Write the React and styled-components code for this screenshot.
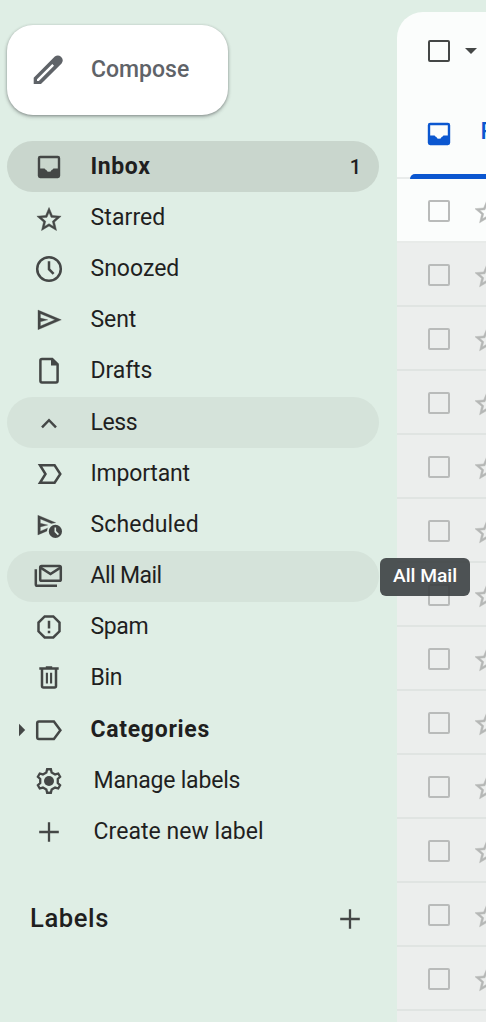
import React from "react";
import styled, { createGlobalStyle } from "styled-components";

const GlobalStyle = createGlobalStyle`
  * {
    box-sizing: border-box;
  }
  body {
    margin: 0;
    background: #dfeee5;
    font-family: Roboto, "Liberation Sans", sans-serif;
    color: #1f1f1f;
    overflow: hidden;
  }
`;

const Page = styled.div`
  display: flex;
  height: 1022px;
  overflow: hidden;
`;

const Sidebar = styled.aside`
  flex: 0 0 397px;
  padding: 25px 18px 0 7px;
`;

const ComposeButton = styled.button`
  display: flex;
  align-items: center;
  gap: 27px;
  width: 221px;
  height: 90px;
  margin: 0 0 26px;
  padding: 0 0 0 25px;
  border: none;
  border-radius: 26px;
  background: #fff;
  box-shadow: 0 1px 3px rgba(60, 64, 67, 0.45), 0 2px 4px rgba(60, 64, 67, 0.2);
  color: #5f6368;
  font-family: inherit;
`;

const Label = styled.span`
  font-size: ${(props) => props.$size || 23}px;
  font-weight: ${(props) => props.$weight || 400};
  letter-spacing: ${(props) => props.$tracking || 0}px;
  line-height: 28px;
  white-space: nowrap;
`;

const ComposeLabel = styled(Label)`
  margin-top: -1px;
`;

const Nav = styled.nav`
  display: flex;
  flex-direction: column;
`;

const NavItem = styled.a`
  position: relative;
  display: flex;
  align-items: center;
  height: 51.2px;
  padding: 0 18px 0 8px;
  border-radius: 26px;
  color: #1f1f1f;
  background: ${(props) =>
    props.$active ? "#c9d6cd" : props.$shaded ? "#d5e3da" : "transparent"};
`;

const Expander = styled.span`
  display: flex;
  width: 18px;
  color: #444746;
`;

const NavIcon = styled.span`
  display: flex;
  color: #444746;
`;

const NavLabel = styled(Label)`
  flex: 1;
  margin-left: ${(props) => (props.$indent ? 28.5 : 25.5)}px;
`;

const Tooltip = styled.div`
  position: absolute;
  left: 373px;
  top: 7px;
  z-index: 2;
  width: 90px;
  height: 38px;
  padding-top: 4px;
  border-radius: 6px;
  background: rgba(60, 64, 67, 0.9);
  color: #fff;
  text-align: center;
`;

const LabelsHeader = styled.div`
  display: flex;
  align-items: center;
  justify-content: space-between;
  height: 52px;
  margin-top: 35px;
  padding: 0 13px 0 23px;
  color: #1f1f1f;
`;

const HeaderLabel = styled(Label)`
  padding-bottom: 2px;
`;

const MailPanel = styled.main`
  flex: 1;
  min-width: 0;
  margin-top: 12px;
  overflow: hidden;
  border-top-left-radius: 26px;
  background: #fbfdfc;
`;

const Toolbar = styled.div`
  display: flex;
  align-items: center;
  gap: 15px;
  height: 78px;
  padding-left: 31px;
  color: #444746;
`;

const Tabs = styled.div`
  height: 89px;
  border-bottom: 2px solid #e9eceb;
`;

const Tab = styled.div`
  position: relative;
  display: flex;
  align-items: center;
  height: 89px;
  width: 300px;
  padding: 0 0 2px 26px;
  gap: 25.5px;
  color: #0b57d0;

  &::after {
    content: "";
    position: absolute;
    left: 13px;
    right: 0;
    bottom: 0;
    height: 5px;
    border-top-left-radius: 5px;
    background: #0b57d0;
  }
`;

const TabLabel = styled(Label)`
  padding-bottom: 4px;
`;

const MailRow = styled.div`
  display: flex;
  align-items: center;
  gap: 22px;
  width: 300px;
  height: 64px;
  padding-left: 31px;
  border-bottom: 2px solid ${(props) => (props.$unread ? "#e8ebe9" : "#e0e4e2")};
  background: ${(props) => (props.$unread ? "#fbfdfc" : "#eceeed")};
`;

const Checkbox = styled.span`
  flex: none;
  width: 22px;
  height: 22px;
  margin-top: ${(props) => (props.$dark ? 0 : 2)}px;
  border: 2px solid ${(props) => (props.$dark ? "#444746" : "#b9bbba")};
  border-radius: 2px;
`;

const Svg = ({ children, size = 32 }) => (
  <svg width={size} height={size} viewBox="0 0 32 32" fill="none">
    {children}
  </svg>
);

const line = { stroke: "currentColor", strokeWidth: 2.5 };

const InboxIcon = () => (
  <Svg>
    <path
      fill="currentColor"
      fillRule="evenodd"
      d="M7.2 4.8H24.8Q27.2 4.8 27.2 7.2V24.8Q27.2 27.2 24.8 27.2H7.2Q4.8 27.2 4.8 24.8V7.2Q4.8 4.8 7.2 4.8ZM7.2 7.2V17.4H11.6Q12.2 18.4 13.4 18.9Q14 20.8 16 20.8Q18 20.8 18.6 18.9Q19.8 18.4 20.4 17.4H24.8V7.2Z"
    />
  </Svg>
);

const STAR =
  "M22 9.24l-7.19-.62L12 2 9.19 8.63 2 9.24l5.46 4.73L5.82 21 12 17.27 18.18 21l-1.63-7.03L22 9.24zM12 15.4l-3.76 2.27 1-4.28-3.32-2.88 4.38-.38L12 6.1l1.71 4.04 4.38.38-3.32 2.88 1 4.28L12 15.4z";

const StarIcon = () => (
  <Svg>
    <path
      fill="currentColor"
      stroke="currentColor"
      strokeWidth=".4"
      transform="translate(1.5 3.1) scale(1.21)"
      d={STAR}
    />
  </Svg>
);

const RowStar = styled.svg.attrs({ viewBox: "2 2 20 19", children: <path d={STAR} /> })`
  flex: none;
  width: 24px;
  height: 22.8px;
  margin-top: 3px;
  margin-left: 2.5px;
  overflow: visible;
  fill: #b5b7b6;
  stroke: #b5b7b6;
  stroke-width: 0.4;
`;

const ClockIcon = () => (
  <Svg>
    <circle cx="16" cy="16" r="11.8" {...line} />
    <path d="M16 8.2V16.2L20.6 20.9" {...line} />
  </Svg>
);

const SEND =
  "M120-160v-640l760 320-760 320Zm80-120 474-200-474-200v140l240 60-240 60v140Z";

const SendIcon = () => (
  <Svg>
    <path
      fill="currentColor"
      stroke="currentColor"
      strokeWidth="10"
      transform="translate(1.3 30.6) scale(.0307)"
      d={SEND}
    />
  </Svg>
);

const DraftIcon = () => (
  <Svg>
    <path
      d="M19.2 3.9H9Q7.4 3.9 7.4 5.5V25.8Q7.4 27.4 9 27.4H23Q24.6 27.4 24.6 25.8V9.3Z"
      {...line}
    />
    <path fill="currentColor" d="M18 3V10.4H25.6Z" />
  </Svg>
);

const LessIcon = () => (
  <Svg>
    <path d="M9 20.3L16 13.2L23 20.3" {...line} />
  </Svg>
);

const ImportantIcon = () => (
  <Svg>
    <path d="M7 7.2H21.6L27.3 16L21.6 24.8H7L12.5 16Z" {...line} />
  </Svg>
);

const ScheduledIcon = () => (
  <Svg>
    <mask id="send-cut">
      <rect width="32" height="32" fill="#fff" />
      <circle cx="22.4" cy="22.4" r="8.5" fill="#000" />
      <rect x="22.8" width="10" height="32" fill="#000" />
    </mask>
    <g mask="url(#send-cut)">
      <path
        fill="currentColor"
        stroke="currentColor"
        strokeWidth="10"
        transform="translate(1.2 30.8) scale(.0307)"
        d={SEND}
      />
    </g>
    <path
      fill="currentColor"
      fillRule="evenodd"
      d="M22.4 15.8A6.6 6.6 0 1 1 22.4 29A6.6 6.6 0 1 1 22.4 15.8ZM21.5 18.4V22.9L24.8 26.2L26 25L23.1 22.1V18.4Z"
    />
  </Svg>
);

const AllMailIcon = () => (
  <Svg>
    <path d="M2.8 9.3V24.2Q2.8 25.8 4.4 25.8H24" {...line} />
    <rect x="7.2" y="5.9" width="20.6" height="14.9" rx="1.4" {...line} />
    <path d="M7.2 7.4L17.5 14L27.8 7.4" {...line} />
  </Svg>
);

const SpamIcon = () => (
  <Svg>
    <path d="M11.7 5.4H20.3L26.5 11.6V20.3L20.3 26.5H11.7L5.5 20.3V11.6Z" {...line} />
    <path d="M16 9.8V17.4M16 19.8V22.2" {...line} />
  </Svg>
);

const BinIcon = () => (
  <Svg>
    <path d="M6.3 6.5H25.7M12.8 5.4H19.2" {...line} />
    <path d="M9 6.5V24Q9 25.5 10.5 25.5H21.5Q23 25.5 23 24V6.5" {...line} />
    <path d="M13.9 10.8V21.6M18.1 10.8V21.6" {...line} strokeWidth={2.1} />
  </Svg>
);

const TagIcon = () => (
  <Svg>
    <path
      d="M6 7.4H20.9L27.4 16.2L20.9 25H6Q4.2 25 4.2 23.2V9.2Q4.2 7.4 6 7.4Z"
      {...line}
    />
  </Svg>
);

// six teeth, each one a trapezoid on the inner ring
const gearPoints = [0, 60, 120, 180, 240, 300]
  .flatMap((tooth) =>
    [
      [-17, 9],
      [-9, 11.9],
      [9, 11.9],
      [17, 9],
    ].map(([offset, radius]) => {
      const angle = ((tooth + offset) * Math.PI) / 180;
      return `${(16 + radius * Math.sin(angle)).toFixed(2)},${(16 - radius * Math.cos(angle)).toFixed(2)}`;
    })
  )
  .join(" ");

const GearIcon = () => (
  <Svg>
    <polygon points={gearPoints} {...line} strokeWidth={2.3} />
    <circle cx="16" cy="16" r="5" fill="currentColor" />
  </Svg>
);

const PlusIcon = () => (
  <Svg>
    <path d="M16 6.2V25.8M6.2 16H25.8" {...line} strokeWidth={2.3} />
  </Svg>
);

const PencilIcon = () => (
  <Svg>
    <path
      fill="currentColor"
      fillRule="evenodd"
      d="M1.7 30V23.8L22.8 2.6Q25.9 .2 29 2.7Q32.2 6 29.6 9.4L9 30ZM5 27H6.8L22 11.8L20.3 9.9L5 25.2Z"
    />
  </Svg>
);

const items = [
  { label: "Inbox", icon: InboxIcon, active: true, weight: 700, tracking: 0.6, count: 1 },
  { label: "Starred", icon: StarIcon, tracking: 0.1 },
  { label: "Snoozed", icon: ClockIcon },
  { label: "Sent", icon: SendIcon, tracking: -0.1 },
  { label: "Drafts", icon: DraftIcon, tracking: -0.1 },
  { label: "Less", icon: LessIcon, shaded: true, tracking: -0.4 },
  { label: "Important", icon: ImportantIcon, tracking: -0.2 },
  { label: "Scheduled", icon: ScheduledIcon, tracking: 0.15 },
  { label: "All Mail", icon: AllMailIcon, shaded: true, tracking: -0.6, tooltip: true },
  { label: "Spam", icon: SpamIcon, tracking: -0.4 },
  { label: "Bin", icon: BinIcon, tracking: -0.3 },
  { label: "Categories", icon: TagIcon, weight: 700, tracking: 0.7, expandable: true },
  { label: "Manage labels", icon: GearIcon, indent: true, tracking: -0.2 },
  { label: "Create new label", icon: PlusIcon, indent: true, tracking: 0.05 },
];

const rows = Array.from({ length: 14 }, (_, index) => ({ id: index, unread: index === 0 }));

const App = () => {
  return (
    <>
      <GlobalStyle />
      <Page>
        <Sidebar>
          <ComposeButton>
            <PencilIcon />
            <ComposeLabel $weight={500}>Compose</ComposeLabel>
          </ComposeButton>
          <Nav>
            {items.map((item) => (
              <NavItem key={item.label} $active={item.active} $shaded={item.shaded}>
                <Expander>
                  {item.expandable && (
                    <svg width="18" height="14" viewBox="0 0 18 14">
                      <path fill="currentColor" d="M4 .8L10.2 7L4 13.2Z" />
                    </svg>
                  )}
                </Expander>
                <NavIcon>
                  <item.icon />
                </NavIcon>
                <NavLabel
                  $weight={item.weight}
                  $tracking={item.tracking}
                  $indent={item.indent}
                >
                  {item.label}
                </NavLabel>
                {item.count && (
                  <Label $size={20} $weight={500}>
                    {item.count}
                  </Label>
                )}
                {item.tooltip && (
                  <Tooltip>
                    <Label $size={19.2} $weight={500}>
                      All Mail
                    </Label>
                  </Tooltip>
                )}
              </NavItem>
            ))}
          </Nav>
          <LabelsHeader>
            <HeaderLabel $size={25.6} $weight={500} $tracking={0.6}>
              Labels
            </HeaderLabel>
            <NavIcon>
              <PlusIcon />
            </NavIcon>
          </LabelsHeader>
        </Sidebar>
        <MailPanel>
          <Toolbar>
            <Checkbox $dark />
            <svg width="12" height="6" viewBox="0 0 12 6">
              <path fill="currentColor" d="M0 0H12L6 6Z" />
            </svg>
          </Toolbar>
          <Tabs>
            <Tab>
              <InboxIcon />
              <TabLabel $weight={500}>Primary</TabLabel>
            </Tab>
          </Tabs>
          {rows.map((row) => (
            <MailRow key={row.id} $unread={row.unread}>
              <Checkbox />
              <RowStar />
            </MailRow>
          ))}
        </MailPanel>
      </Page>
    </>
  );
};

export default App;
